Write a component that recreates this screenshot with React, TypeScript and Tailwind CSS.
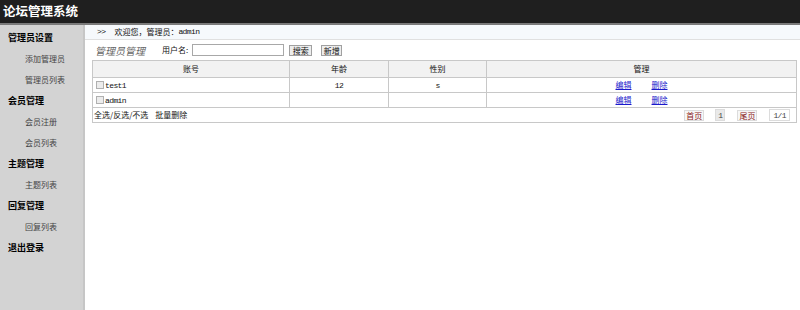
import React from 'react';

const font = { fontFamily: '"Noto Sans CJK SC", "Liberation Sans", sans-serif' };
const mono = { fontFamily: '"Liberation Mono", monospace' };

const menu = [
  { title: '管理员设置', items: ['添加管理员', '管理员列表'] },
  { title: '会员管理', items: ['会员注册', '会员列表'] },
  { title: '主题管理', items: ['主题列表'] },
  { title: '回复管理', items: ['回复列表'] },
  { title: '退出登录', items: [] },
];

const rows = [
  { name: 'test1', age: '12', sex: 's' },
  { name: 'admin', age: '', sex: '' },
];

// latin text in the old page is narrow half-width
function Latin({ children }: { children: React.ReactNode }) {
  return (
    <span className="tracking-[-0.6px]" style={mono}>
      {children}
    </span>
  );
}

function Checkbox() {
  return <span className="inline-block w-[8px] h-[8px] border border-[#b0b0b0] bg-[#ececec] mr-[1px] align-[-1px]" />;
}

export default function App() {
  return (
    <div className="w-[800px] h-[310px] flex flex-col bg-white text-[8px] text-[#111]" style={font}>
      <div className="h-[25px] shrink-0 bg-[#1f1f1f] border-b-2 border-[#7a7a7a] flex items-center pl-[3px]">
        <span className="text-white font-bold text-[12.5px]">论坛管理系统</span>
      </div>
      <div className="flex flex-1">
        <div className="w-[85px] shrink-0 bg-[#d3d3d3] border-r-2 border-[#c6c6c6] pt-[2px]">
          {menu.map((m) => (
            <div key={m.title}>
              <div className="h-[21px] flex items-center pl-[8px] font-bold text-[9px] text-[#000]">{m.title}</div>
              {m.items.map((i) => (
                <div key={i} className="h-[21px] flex items-center pl-[25px] text-[#444]">
                  {i}
                </div>
              ))}
            </div>
          ))}
        </div>
        <div className="flex-1 flex flex-col">
          <div className="h-[15px] bg-[#f6f9fc] border-b border-[#e0e0e0] flex items-center pl-[12px]">
            <Latin>&gt;&gt;</Latin>
            <span className="ml-[9px]">欢迎您，管理员：</span>
            <Latin>admin</Latin>
          </div>
          <div className="pl-[7px] pr-[3px]">
            <div className="h-[20px] flex items-center">
              <span className="italic text-[10px] text-[#666] ml-[3px] w-[67px]" style={{ fontFamily: '"Noto Sans CJK SC", serif' }}>
                管理员管理
              </span>
              <span>用户名:</span>
              <input className="ml-[4px] w-[92px] h-[12px] border border-[#a8a8a8] bg-white" />
              <button className="ml-[5px] h-[11px] w-[23px] text-[8px] leading-[9px] border border-[#a0a0a0] bg-[#ededed]">搜索</button>
              <button className="ml-[9px] h-[11px] w-[21px] text-[8px] leading-[9px] border border-[#a0a0a0] bg-[#ededed]">新增</button>
            </div>
            <table className="w-full border-collapse border border-[#c8c8c8]">
              <thead>
                <tr className="h-[17px] bg-[#f2f2f2]">
                  <th className="w-[197px] border border-[#c8c8c8] font-normal">账号</th>
                  <th className="w-[99px] border border-[#c8c8c8] font-normal">年龄</th>
                  <th className="w-[98px] border border-[#c8c8c8] font-normal">性别</th>
                  <th className="border border-[#c8c8c8] font-normal">管理</th>
                </tr>
              </thead>
              <tbody>
                {rows.map((r) => (
                  <tr key={r.name} className="h-[15px]">
                    <td className="border border-[#c8c8c8] pl-[3px]">
                      <Checkbox />
                      <Latin>{r.name}</Latin>
                    </td>
                    <td className="border border-[#c8c8c8] text-center">
                      <Latin>{r.age}</Latin>
                    </td>
                    <td className="border border-[#c8c8c8] text-center">
                      <Latin>{r.sex}</Latin>
                    </td>
                    <td className="border border-[#c8c8c8] text-center">
                      <a className="text-[#1a1acc] underline mr-[20px]">编辑</a>
                      <a className="text-[#1a1acc] underline">删除</a>
                    </td>
                  </tr>
                ))}
                <tr className="h-[15px]">
                  <td colSpan={4} className="border border-[#c8c8c8] pl-[1px]">
                    <div className="flex items-center">
                      <span className="text-[#111]">全选/反选/不选</span>
                      <span className="ml-[7px] text-[#111]">批量删除</span>
                      <div className="ml-auto flex items-center pr-[6px] text-[#8a1a1a]">
                        <span className="border border-[#dcdcdc] bg-[#f7f7f7] px-[1px] leading-[9px]">首页</span>
                        <span className="ml-[11px] border border-[#dcdcdc] bg-[#e9e9e9] px-[2px] leading-[9px] text-[#444]">
                          <Latin>1</Latin>
                        </span>
                        <span className="ml-[12px] border border-[#dcdcdc] bg-[#f7f7f7] px-[1px] leading-[9px]">尾页</span>
                        <span className="ml-[12px] border border-[#dcdcdc] bg-white px-[3px] leading-[9px] text-[#444]">
                          <Latin>1/1</Latin>
                        </span>
                      </div>
                    </div>
                  </td>
                </tr>
              </tbody>
            </table>
          </div>
        </div>
      </div>
    </div>
  );
}
